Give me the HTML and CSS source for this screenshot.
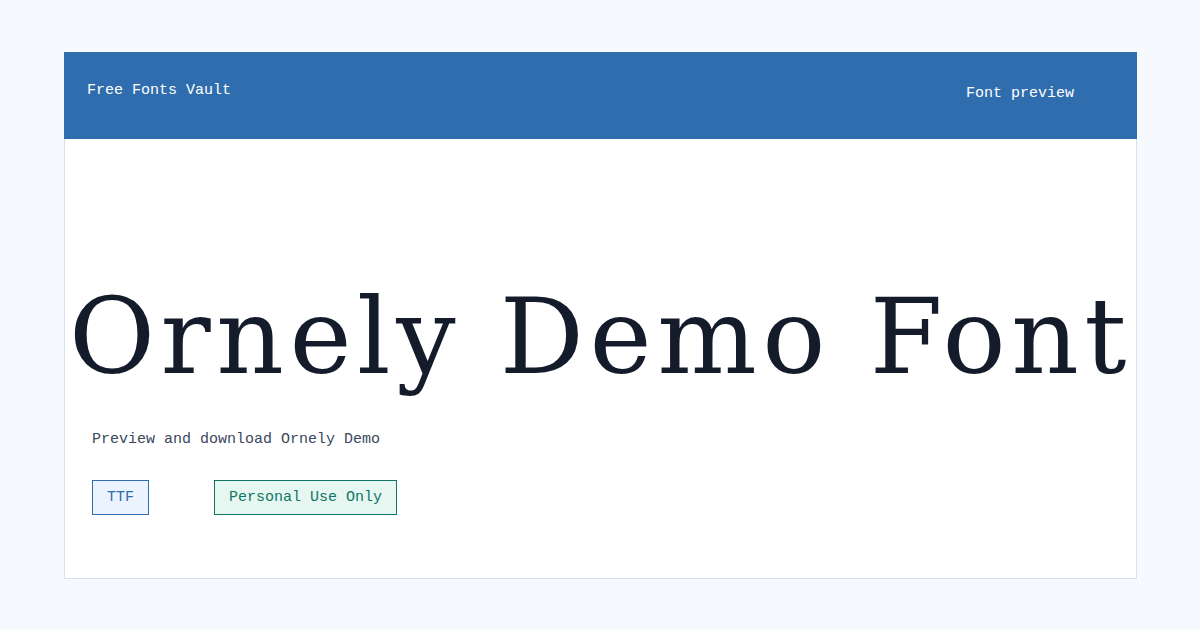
FILE: index.html
```html
<!DOCTYPE html>
<html lang="en">
<head>
  <meta charset="UTF-8">
  <meta name="viewport" content="width=device-width, initial-scale=1.0">
  <title>Ornely Demo Font</title>
  <link rel="stylesheet" href="styles.css">
</head>
<body>

  <div class="card">
    <header class="topbar">
      <div class="brand">Free Fonts Vault</div>
      <div class="nav">Font preview</div>
    </header>

    <main class="preview">
      <h1 class="sample">Ornely Demo Font</h1>
      <p class="lead">Preview and download Ornely Demo</p>
      <div class="tags">
        <span class="tag tag-format">TTF</span>
        <span class="tag tag-license">Personal Use Only</span>
      </div>
    </main>
  </div>

</body>
</html>
```

FILE: styles.css
```css
body {
  margin: 0;
  background: #f6f9fe;
  font-family: 'Liberation Mono', 'DejaVu Sans Mono', monospace;
  padding: 52px 63px 0 64px;
}

.card {
  background: #ffffff;
  border: 1px solid #d9e1ec;
  height: 527px;
  box-sizing: border-box;
  display: flex;
  flex-direction: column;
}

.topbar {
  background: #2f6dae;
  color: #ffffff;
  height: 87px;
  margin: -1px -1px 0;
  display: flex;
  justify-content: space-between;
  padding: 30px 63px 0 23px;
  box-sizing: border-box;
  font-size: 15px;
  line-height: 17px;
}

.nav {
  margin-top: 3px;
}

.preview {
  padding: 0 27px 63px;
  display: flex;
  flex-direction: column;
  flex: 1;
  justify-content: flex-end;
}

/* big specimen line, wider than the card on purpose */
.sample {
  font-family: 'DejaVu Serif', serif;
  font-weight: normal;
  font-size: 105px;
  letter-spacing: 5.5px;
  color: #141b2b;
  margin: 0 -27px;
  text-align: center;
  line-height: 1;
  white-space: nowrap;
}

.lead {
  margin: 41px 0 0;
  font-size: 15px;
  line-height: 17px;
  color: #3b475c;
}

.tags {
  display: flex;
  gap: 65px;
  margin-top: 32px;
}

.tag {
  font-size: 15px;
  line-height: 17px;
  padding: 8px 14px;
  border: 1px solid;
}

.tag-format {
  color: #2f6dae;
  border-color: #2f6dae;
  background: #eaf3fe;
}

.tag-license {
  color: #0f7565;
  border-color: #0f7565;
  background: #e6f6f1;
}
```
